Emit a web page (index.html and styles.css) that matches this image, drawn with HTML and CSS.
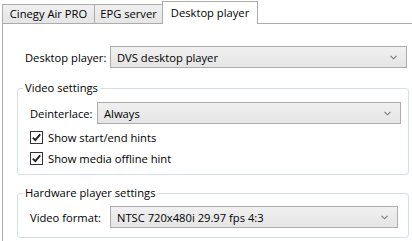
FILE: index.html
```html
<!DOCTYPE html>
<html>
<head>
<meta charset="utf-8">
<link rel="stylesheet" href="styles.css">
</head>
<body>
<div class="window">
  <div class="tabs">
    <div class="tab tab-air">Cinegy Air PRO</div>
    <div class="tab tab-epg">EPG server</div>
    <div class="tab tab-desktop active">Desktop player</div>
  </div>
  <div class="panel">
    <div class="row row-main">
      <span class="label label-player">Desktop player:</span>
      <div class="combo">
        <span class="combo-text">DVS desktop player</span>
        <svg class="chevron" width="7" height="5" viewBox="0 0 7 5"><path d="M0.5 0.8 L3.5 3.8 L6.5 0.8" fill="none" stroke="#7a7a7a" stroke-width="1.1"/></svg>
      </div>
    </div>

    <fieldset class="group group-video">
      <legend>Video settings</legend>
      <div class="row">
        <span class="label label-deint">Deinterlace:</span>
        <div class="combo">
          <span class="combo-text">Always</span>
          <svg class="chevron" width="7" height="5" viewBox="0 0 7 5"><path d="M0.5 0.8 L3.5 3.8 L6.5 0.8" fill="none" stroke="#7a7a7a" stroke-width="1.1"/></svg>
        </div>
      </div>
      <div class="check">
        <svg class="box" width="13" height="13" viewBox="0 0 13 13"><rect x="0.5" y="0.5" width="12" height="12" fill="#fff" stroke="#333"/><path d="M2.8 6.6 L5.3 9.2 L10.2 3.4" fill="none" stroke="#1e1e1e" stroke-width="1.9"/></svg>
        <span>Show start/end hints</span>
      </div>
      <div class="check">
        <svg class="box" width="13" height="13" viewBox="0 0 13 13"><rect x="0.5" y="0.5" width="12" height="12" fill="#fff" stroke="#333"/><path d="M2.8 6.6 L5.3 9.2 L10.2 3.4" fill="none" stroke="#1e1e1e" stroke-width="1.9"/></svg>
        <span>Show media offline hint</span>
      </div>
    </fieldset>

    <fieldset class="group group-hw">
      <legend>Hardware player settings</legend>
      <div class="row">
        <span class="label label-format">Video format:</span>
        <div class="combo combo-format">
          <span class="combo-text">NTSC 720x480i 29.97 fps 4:3</span>
          <svg class="chevron" width="7" height="5" viewBox="0 0 7 5"><path d="M0.5 0.8 L3.5 3.8 L6.5 0.8" fill="none" stroke="#7a7a7a" stroke-width="1.1"/></svg>
        </div>
      </div>
    </fieldset>
  </div>
</div>
</body>
</html>
```

FILE: styles.css
```css
* { box-sizing: border-box; }

html, body {
  margin: 0;
  padding: 0;
  background: #fff;
}

body {
  font-family: "Open Sans", "Noto Sans", sans-serif;
  font-size: 11.2px;
  color: #000;
  width: 412px;
  height: 241px;
  overflow: hidden;
}

.window {
  width: 412px;
  height: 241px;
  display: flex;
  flex-direction: column;
}

.tabs {
  display: flex;
  align-items: flex-end;
  height: 23px;
  padding-left: 2px;
  position: relative;
  z-index: 2;
}

.tab {
  height: 19px;
  border: 1px solid #acacac;
  border-bottom: none;
  background: linear-gradient(#f0f0f0, #e5e5e5);
  margin-right: -1px;
  display: flex;
  align-items: center;
  justify-content: center;
  white-space: nowrap;
  padding-bottom: 1px;
}

.tab-air { width: 93px; }
.tab-epg { width: 69px; }
.tab-desktop { width: 96px; }

.tab.active {
  height: 23px;
  margin-bottom: -1px;
  background: #fff;
  padding-bottom: 2px;
  position: relative;
}

.panel {
  flex: 1;
  margin-left: 2px;
  border-top: 1px solid #acacac;
  border-left: 1px solid #acacac;
  padding: 22px 5px 0 0;
}

.row {
  display: flex;
  align-items: center;
  height: 22px;
}

.row-main {
  padding-left: 22px;
}

.label {
  flex: none;
  white-space: nowrap;
}

.label-player { width: 85px; }
.label-deint { width: 67px; }
.label-format { width: 80px; }

.combo {
  flex: 1;
  height: 22px;
  border: 1px solid #acacac;
  background: linear-gradient(#f0f0f0, #e5e5e5);
  display: flex;
  align-items: center;
  padding: 0 9px 0 6px;
}

.combo-format {
  margin-right: 3px;
}

.combo-text {
  flex: 1;
  white-space: nowrap;
}

.chevron {
  flex: none;
  display: block;
}

.group {
  margin: 12px -2px 0 14px;
  border: 1px solid #d5dfe5;
  border-radius: 3px;
  padding: 6px 7px 9px 12px;
  min-inline-size: 0;
}

.group legend {
  padding: 0 2px;
  margin-left: -7px;
  line-height: 16px;
  height: 16px;
}

.group-hw {
  margin-top: 10px;
  padding-top: 5px;
  padding-bottom: 9px;
}

.check {
  display: flex;
  align-items: center;
  height: 13px;
  margin-top: 7px;
}

.check + .check {
  margin-top: 8px;
}

.check .box {
  flex: none;
  display: block;
  margin-right: 5px;
}

.check span {
  white-space: nowrap;
}
```
